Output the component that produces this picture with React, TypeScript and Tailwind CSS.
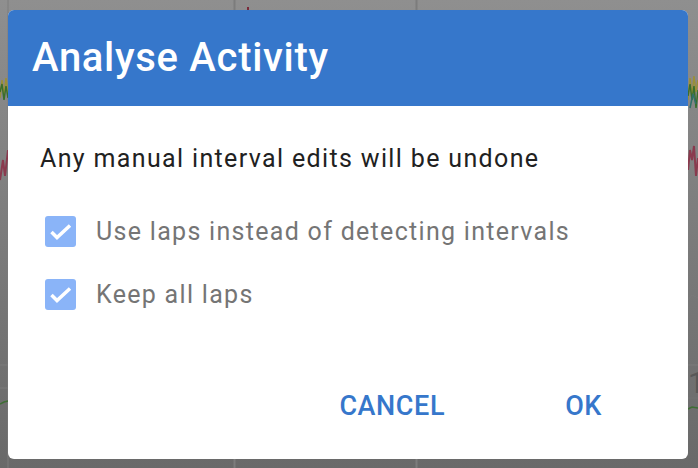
import React from "react";

function Backdrop() {
  return (
    <div className="absolute inset-0 bg-gradient-to-b from-[#8f8f8f] to-[#696969]">
      <svg width="698" height="468" className="block">
        <line x1="234.5" y1="0" x2="234.5" y2="468" stroke="#7c7c7c" strokeWidth="2" />
        <line x1="416.5" y1="0" x2="416.5" y2="468" stroke="#7c7c7c" strokeWidth="2" />
        <line x1="8" y1="0" x2="8" y2="468" stroke="#7c7c7c" strokeWidth="1" />
        <line x1="0" y1="238" x2="698" y2="238" stroke="#7c7c7c" />
        <line x1="0" y1="365" x2="698" y2="365" stroke="#7c7c7c" />
        <line x1="0" y1="388" x2="20" y2="388" stroke="#7c7c7c" />
        <line x1="680" y1="398" x2="698" y2="398" stroke="#737373" />
        <rect x="247" y="7" width="2" height="3" fill="#7a2a3a" />
        {/* left traces */}
        <polyline points="0,98 2,80 4,96 6,78 8,94" fill="none" stroke="#9a8f38" strokeWidth="1.5" />
        <polyline points="0,92 2,84 4,100 6,86 8,98" fill="none" stroke="#3a6e2c" strokeWidth="1.5" />
        <polyline points="0,180 3,160 5,176 8,150" fill="none" stroke="#8a3a4e" strokeWidth="2" />
        <polyline points="0,336 4,338 8,343" fill="none" stroke="#757575" strokeWidth="1" />
        <polyline points="0,404 4,402 8,401" fill="none" stroke="#3e6e34" strokeWidth="1.5" />
        {/* right traces */}
        <polyline points="688,100 690,78 692,96 694,76 696,92 698,80" fill="none" stroke="#9a8f38" strokeWidth="1.5" />
        <polyline points="688,96 690,84 692,100 694,86 696,108 698,90" fill="none" stroke="#3a6e2c" strokeWidth="1.5" />
        <polyline points="690,108 693,94 696,104" fill="none" stroke="#2f7068" strokeWidth="1.5" />
        <polyline points="688,170 690,150 692,160 694,146 696,176 698,158" fill="none" stroke="#8a3a4e" strokeWidth="2" />
        <polyline points="688,300 692,295 698,298" fill="none" stroke="#7a7a7a" strokeWidth="1" />
        <polyline points="688,409 692,407 698,408" fill="none" stroke="#3e6e34" strokeWidth="1.5" />
      </svg>
      <span className="absolute left-[688px] top-[368px] text-[30px] leading-none text-[#585858]">1</span>
    </div>
  );
}

function Check() {
  return (
    <span className="w-[31px] h-[31px] rounded-[3px] bg-[#8ab4f8] flex items-center justify-center shrink-0">
      <svg width="31" height="31" viewBox="0 0 31 31">
        <polyline points="6.5,16 12,21.5 25,9.5" fill="none" stroke="#ffffff" strokeWidth="3.5" />
      </svg>
    </span>
  );
}

export default function App() {
  return (
    <div className="relative w-[698px] h-[468px] overflow-hidden font-['Roboto',sans-serif]">
      <Backdrop />
      <div className="relative pt-[10px] pl-[8px]">
        <div className="w-[680px] h-[449px] flex flex-col rounded-[6px] bg-white overflow-hidden">
          <div className="h-[96px] bg-[#3677cb] flex items-center px-[24px]">
            <h1 className="text-[40px] font-medium text-white leading-none tracking-[0.7px]">
              Analyse Activity
            </h1>
          </div>
          <div className="flex-1 flex flex-col px-[32px] pt-[37px]">
            <p className="text-[25px] leading-[32px] tracking-[1.35px] text-[#212121]">
              Any manual interval edits will be undone
            </p>
            <div className="mt-[25px] flex flex-col pl-[5px]">
              <label className="h-[63px] flex items-center gap-[20px]">
                <Check />
                <span className="text-[25px] tracking-[1.3px] text-[#757575]">
                  Use laps instead of detecting intervals
                </span>
              </label>
              <label className="h-[63px] flex items-center gap-[20px]">
                <Check />
                <span className="text-[25px] tracking-[1.3px] text-[#757575]">Keep all laps</span>
              </label>
            </div>
            <div className="mt-auto mb-[25px] flex justify-end gap-[72px] pr-[30px]">
              <button className="h-[56px] px-[24px] text-[27px] font-medium tracking-[0.6px] text-[#3677cb]">
                CANCEL
              </button>
              <button className="h-[56px] px-[24px] text-[27px] font-medium tracking-[0.6px] text-[#3677cb]">
                OK
              </button>
            </div>
          </div>
        </div>
      </div>
    </div>
  );
}
